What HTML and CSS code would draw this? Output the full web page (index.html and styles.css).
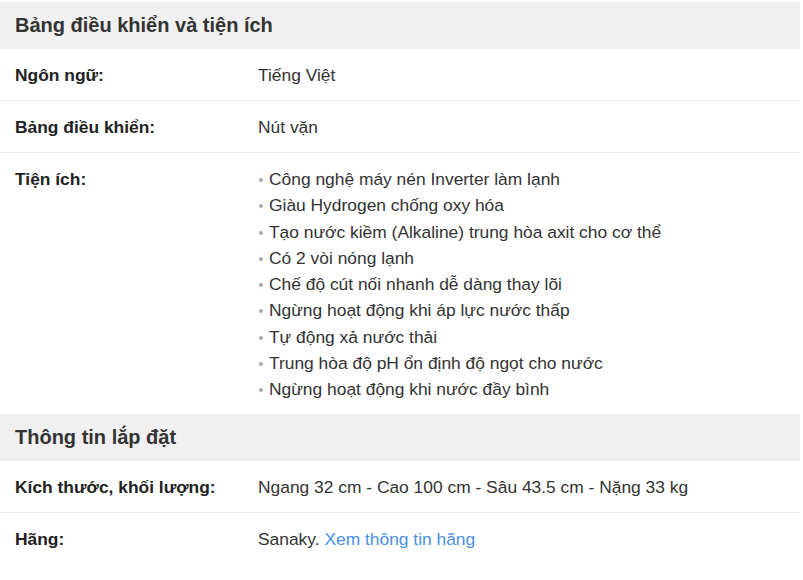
FILE: index.html
```html
<!DOCTYPE html>
<html lang="vi">
<head>
<meta charset="utf-8">
<link rel="stylesheet" href="styles.css">
</head>
<body>
<div class="specs">
  <div class="section-title">Bảng điều khiển và tiện ích</div>
  <div class="row">
    <div class="label">Ngôn ngữ:</div>
    <div class="value">Tiếng Việt</div>
  </div>
  <div class="row">
    <div class="label">Bảng điều khiển:</div>
    <div class="value">Nút vặn</div>
  </div>
  <div class="row last">
    <div class="label">Tiện ích:</div>
    <ul class="value list">
      <li>Công nghệ máy nén Inverter làm lạnh</li>
      <li>Giàu Hydrogen chống oxy hóa</li>
      <li>Tạo nước kiềm (Alkaline) trung hòa axit cho cơ thể</li>
      <li>Có 2 vòi nóng lạnh</li>
      <li>Chế độ cút nối nhanh dễ dàng thay lõi</li>
      <li>Ngừng hoạt động khi áp lực nước thấp</li>
      <li>Tự động xả nước thải</li>
      <li>Trung hòa độ pH ổn định độ ngọt cho nước</li>
      <li>Ngừng hoạt động khi nước đầy bình</li>
    </ul>
  </div>
  <div class="section-title">Thông tin lắp đặt</div>
  <div class="row">
    <div class="label">Kích thước, khối lượng:</div>
    <div class="value">Ngang 32 cm - Cao 100 cm - Sâu 43.5 cm - Nặng 33 kg</div>
  </div>
  <div class="row last">
    <div class="label">Hãng:</div>
    <div class="value">Sanaky. <a class="link" href="#">Xem thông tin hãng</a></div>
  </div>
</div>
</body>
</html>
```
FILE: styles.css
```css
html, body {
  margin: 0;
  padding: 0;
  background: #fff;
}
body {
  font-family: "Liberation Sans", Arial, sans-serif;
  color: #333;
}
.specs {
  width: 800px;
  padding-top: 2px;
}
.section-title {
  background: #f0f0f0;
  height: 47px;
  line-height: 47px;
  padding-left: 15px;
  font-size: 20px;
  font-weight: bold;
  color: #333;
}
.row {
  display: grid;
  grid-template-columns: 243px 1fr;
  padding: 13px 0 12px 15px;
  border-bottom: 1px solid #e8e8e8;
  font-size: 17.4px;
  line-height: 26px;
}
.row.last {
  border-bottom: none;
}
.label {
  font-weight: bold;
  color: #222;
}
.value {
  color: #333;
}
.list {
  list-style: none;
  margin: 0;
  padding: 0;
  line-height: 26.25px;
}
.list li {
  position: relative;
  padding-left: 11px;
}
.list li::before {
  content: "";
  position: absolute;
  left: 1px;
  top: 12px;
  width: 4px;
  height: 4px;
  border-radius: 50%;
  background: #aaa;
}
.link {
  color: #4a90e2;
  text-decoration: none;
}
```
